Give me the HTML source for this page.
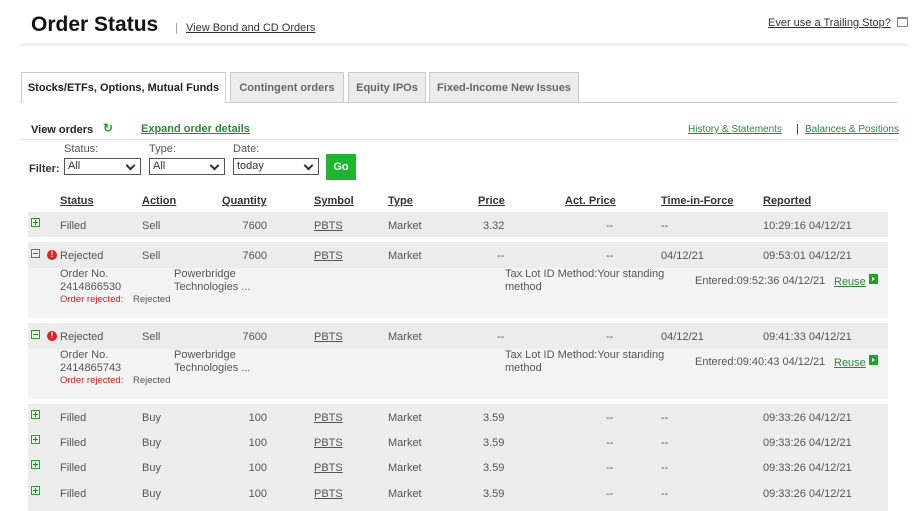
<!DOCTYPE html>
<html><head><meta charset="utf-8"><style>
body{margin:0;width:917px;height:511px;background:#fff;position:relative;overflow:hidden;font-family:"Liberation Sans",Arial,sans-serif;}
.a{position:absolute;white-space:nowrap;}
.t{font-size:11px;color:#555;line-height:13px;}
.h{font-size:11px;font-weight:bold;color:#333;text-decoration:underline;}
.u{text-decoration:underline;}
.tab{position:absolute;top:72px;height:30px;background:#ececec;border:1px solid #ccc;border-bottom:none;font-size:11px;font-weight:bold;color:#666;line-height:30px;text-align:center;box-sizing:border-box;}
.sel{position:absolute;top:158px;height:17px;border:1px solid #555;box-sizing:border-box;font-size:11px;color:#333;line-height:15px;padding-left:3px;background:#fff;}
.sel:after{content:"";position:absolute;right:6px;top:3px;width:5px;height:5px;border-right:2px solid #333;border-bottom:2px solid #333;transform:rotate(45deg);}
.pl{position:absolute;width:9px;height:9px;border:1px solid #2a9d3a;background:#e6f6e6;box-sizing:border-box;}
.pl:before{content:"";position:absolute;left:1px;top:3px;width:5px;height:1px;background:#1a8a2a;}
.pl.p:after{content:"";position:absolute;left:3px;top:1px;width:1px;height:5px;background:#1a8a2a;}
.ex{position:absolute;width:10px;height:10px;border-radius:50%;background:#d22;color:#fff;font-size:8px;font-weight:bold;line-height:10px;text-align:center;}
.go{position:absolute;width:9px;height:10px;background:#1aa52a;}
.go:after{content:"";position:absolute;left:3px;top:3px;border-left:3px solid #fff;border-top:2px solid transparent;border-bottom:2px solid transparent;}
.g{color:#2a8a3a;}
.r .t,.r.t{}
</style></head><body>
<div class="a" style="left:31px;top:13px;font-size:21px;font-weight:bold;color:#111;">Order Status</div>
<div class="a" style="left:175px;top:22px;font-size:11px;color:#999;">|</div>
<div class="a u" style="left:186px;top:22px;font-size:11px;color:#333;">View Bond and CD Orders</div>
<div class="a u" style="left:768px;top:17px;font-size:11px;color:#333;">Ever use a Trailing Stop?</div>
<div class="a" style="left:897px;top:17px;width:9px;height:7px;border:1px solid #888;border-top:2px solid #888;"></div>
<div class="a" style="left:20px;top:43px;width:888px;height:3px;background:#f0f0f0;"></div>

<div class="a" style="left:20px;top:102px;width:878px;height:1px;background:#ccc;"></div>
<div class="tab" style="left:21px;width:205px;background:#fff;color:#222;height:31px;">Stocks/ETFs, Options, Mutual Funds</div>
<div class="tab" style="left:230px;width:114px;">Contingent orders</div>
<div class="tab" style="left:348px;width:78px;">Equity IPOs</div>
<div class="tab" style="left:429px;width:150px;">Fixed-Income New Issues</div>

<div class="a" style="left:31px;top:124px;font-size:11px;font-weight:bold;color:#222;">View orders</div>
<div class="a" style="left:103px;top:121px;font-size:12px;font-weight:bold;color:#2a9d3a;">↻</div>
<div class="a u g" style="left:141px;top:123px;font-size:11px;font-weight:bold;">Expand order details</div>
<div class="a u g" style="left:688px;top:124px;font-size:10px;">History &amp; Statements</div>
<div class="a" style="left:796px;top:123px;font-size:11px;color:#333;">|</div>
<div class="a u g" style="left:805px;top:124px;font-size:10px;">Balances &amp; Positions</div>
<div class="a" style="left:20px;top:139px;width:878px;height:1px;background:#ddd;"></div>

<div class="a t" style="left:64px;top:143px;">Status:</div>
<div class="a t" style="left:149px;top:143px;">Type:</div>
<div class="a t" style="left:233px;top:143px;">Date:</div>
<div class="a t" style="left:29px;top:163px;font-weight:bold;color:#333;">Filter:</div>
<div class="sel" style="left:64px;width:77px;">All</div>
<div class="sel" style="left:149px;width:76px;">All</div>
<div class="sel" style="left:233px;width:86px;">today</div>
<div class="a" style="left:326px;top:154px;width:30px;height:26px;background:#1fb52f;color:#fff;font-size:11px;font-weight:bold;line-height:26px;text-align:center;">Go</div>

<div class="a h" style="left:60px;top:195px;">Status</div>
<div class="a h" style="left:142px;top:195px;">Action</div>
<div class="a h" style="left:222px;top:195px;">Quantity</div>
<div class="a h" style="left:314px;top:195px;">Symbol</div>
<div class="a h" style="left:388px;top:195px;">Type</div>
<div class="a h" style="left:478px;top:195px;">Price</div>
<div class="a h" style="left:565px;top:195px;">Act. Price</div>
<div class="a h" style="left:661px;top:195px;">Time-in-Force</div>
<div class="a h" style="left:763px;top:195px;">Reported</div>

<div class="a" style="left:28px;top:212px;width:860px;height:25px;background:#ececec;"></div>
<div class="a" style="left:28px;top:242px;width:860px;height:76px;background:#f4f4f4;"></div>
<div class="a" style="left:28px;top:242px;width:860px;height:26px;background:#ececec;"></div>
<div class="a" style="left:28px;top:323px;width:860px;height:76px;background:#f4f4f4;"></div>
<div class="a" style="left:28px;top:323px;width:860px;height:26px;background:#ececec;"></div>
<div class="a" style="left:28px;top:404px;width:860px;height:107px;background:#ededed;"></div>

<!-- row 1 -->
<div class="pl p" style="left:31px;top:218px;"></div>
<div class="a t" style="left:60px;top:220px;">Filled</div>
<div class="a t" style="left:142px;top:220px;">Sell</div>
<div class="a t" style="left:222px;top:220px;width:45px;text-align:right;">7600</div>
<div class="a t u" style="left:314px;top:220px;">PBTS</div>
<div class="a t" style="left:388px;top:220px;">Market</div>
<div class="a t" style="left:483px;top:220px;">3.32</div>
<div class="a t" style="left:606px;top:220px;">--</div>
<div class="a t" style="left:661px;top:220px;">--</div>
<div class="a t" style="left:763px;top:220px;">10:29:16 04/12/21</div>

<!-- row 2 -->
<div class="pl" style="left:31px;top:249px;"></div>
<div class="ex" style="left:47px;top:250px;">!</div>
<div class="a t" style="left:60px;top:250px;">Rejected</div>
<div class="a t" style="left:142px;top:250px;">Sell</div>
<div class="a t" style="left:222px;top:250px;width:45px;text-align:right;">7600</div>
<div class="a t u" style="left:314px;top:250px;">PBTS</div>
<div class="a t" style="left:388px;top:250px;">Market</div>
<div class="a t" style="left:497px;top:250px;">--</div>
<div class="a t" style="left:606px;top:250px;">--</div>
<div class="a t" style="left:661px;top:250px;">04/12/21</div>
<div class="a t" style="left:763px;top:250px;">09:53:01 04/12/21</div>
<div class="a t" style="left:60px;top:268px;">Order No.<br>2414866530</div>
<div class="a t" style="left:174px;top:268px;">Powerbridge<br>Technologies ...</div>
<div class="a" style="left:60px;top:294px;font-size:9.5px;color:#c22;">Order rejected:</div>
<div class="a" style="left:133px;top:294px;font-size:9.5px;color:#555;">Rejected</div>
<div class="a t" style="left:505px;top:268px;">Tax Lot ID Method:Your standing<br>method</div>
<div class="a t" style="left:695px;top:275px;">Entered:09:52:36 04/12/21</div>
<div class="a t u g" style="left:834px;top:276px;">Reuse</div>
<div class="go" style="left:869px;top:274px;"></div>

<!-- row 3 -->
<div class="pl" style="left:31px;top:330px;"></div>
<div class="ex" style="left:47px;top:331px;">!</div>
<div class="a t" style="left:60px;top:331px;">Rejected</div>
<div class="a t" style="left:142px;top:331px;">Sell</div>
<div class="a t" style="left:222px;top:331px;width:45px;text-align:right;">7600</div>
<div class="a t u" style="left:314px;top:331px;">PBTS</div>
<div class="a t" style="left:388px;top:331px;">Market</div>
<div class="a t" style="left:497px;top:331px;">--</div>
<div class="a t" style="left:606px;top:331px;">--</div>
<div class="a t" style="left:661px;top:331px;">04/12/21</div>
<div class="a t" style="left:763px;top:331px;">09:41:33 04/12/21</div>
<div class="a t" style="left:60px;top:349px;">Order No.<br>2414865743</div>
<div class="a t" style="left:174px;top:349px;">Powerbridge<br>Technologies ...</div>
<div class="a" style="left:60px;top:375px;font-size:9.5px;color:#c22;">Order rejected:</div>
<div class="a" style="left:133px;top:375px;font-size:9.5px;color:#555;">Rejected</div>
<div class="a t" style="left:505px;top:349px;">Tax Lot ID Method:Your standing<br>method</div>
<div class="a t" style="left:695px;top:356px;">Entered:09:40:43 04/12/21</div>
<div class="a t u g" style="left:834px;top:357px;">Reuse</div>
<div class="go" style="left:869px;top:355px;"></div>

<!-- buy rows -->
<div class="pl p" style="left:31px;top:410px;"></div>
<div class="a t" style="left:60px;top:412px;">Filled</div><div class="a t" style="left:142px;top:412px;">Buy</div><div class="a t" style="left:222px;top:412px;width:45px;text-align:right;">100</div><div class="a t u" style="left:314px;top:412px;">PBTS</div><div class="a t" style="left:388px;top:412px;">Market</div><div class="a t" style="left:483px;top:412px;">3.59</div><div class="a t" style="left:606px;top:412px;">--</div><div class="a t" style="left:661px;top:412px;">--</div><div class="a t" style="left:763px;top:412px;">09:33:26 04/12/21</div>
<div class="pl p" style="left:31px;top:435px;"></div>
<div class="a t" style="left:60px;top:437px;">Filled</div><div class="a t" style="left:142px;top:437px;">Buy</div><div class="a t" style="left:222px;top:437px;width:45px;text-align:right;">100</div><div class="a t u" style="left:314px;top:437px;">PBTS</div><div class="a t" style="left:388px;top:437px;">Market</div><div class="a t" style="left:483px;top:437px;">3.59</div><div class="a t" style="left:606px;top:437px;">--</div><div class="a t" style="left:661px;top:437px;">--</div><div class="a t" style="left:763px;top:437px;">09:33:26 04/12/21</div>
<div class="pl p" style="left:31px;top:460px;"></div>
<div class="a t" style="left:60px;top:462px;">Filled</div><div class="a t" style="left:142px;top:462px;">Buy</div><div class="a t" style="left:222px;top:462px;width:45px;text-align:right;">100</div><div class="a t u" style="left:314px;top:462px;">PBTS</div><div class="a t" style="left:388px;top:462px;">Market</div><div class="a t" style="left:483px;top:462px;">3.59</div><div class="a t" style="left:606px;top:462px;">--</div><div class="a t" style="left:661px;top:462px;">--</div><div class="a t" style="left:763px;top:462px;">09:33:26 04/12/21</div>
<div class="pl p" style="left:31px;top:486px;"></div>
<div class="a t" style="left:60px;top:488px;">Filled</div><div class="a t" style="left:142px;top:488px;">Buy</div><div class="a t" style="left:222px;top:488px;width:45px;text-align:right;">100</div><div class="a t u" style="left:314px;top:488px;">PBTS</div><div class="a t" style="left:388px;top:488px;">Market</div><div class="a t" style="left:483px;top:488px;">3.59</div><div class="a t" style="left:606px;top:488px;">--</div><div class="a t" style="left:661px;top:488px;">--</div><div class="a t" style="left:763px;top:488px;">09:33:26 04/12/21</div>
</body></html>
